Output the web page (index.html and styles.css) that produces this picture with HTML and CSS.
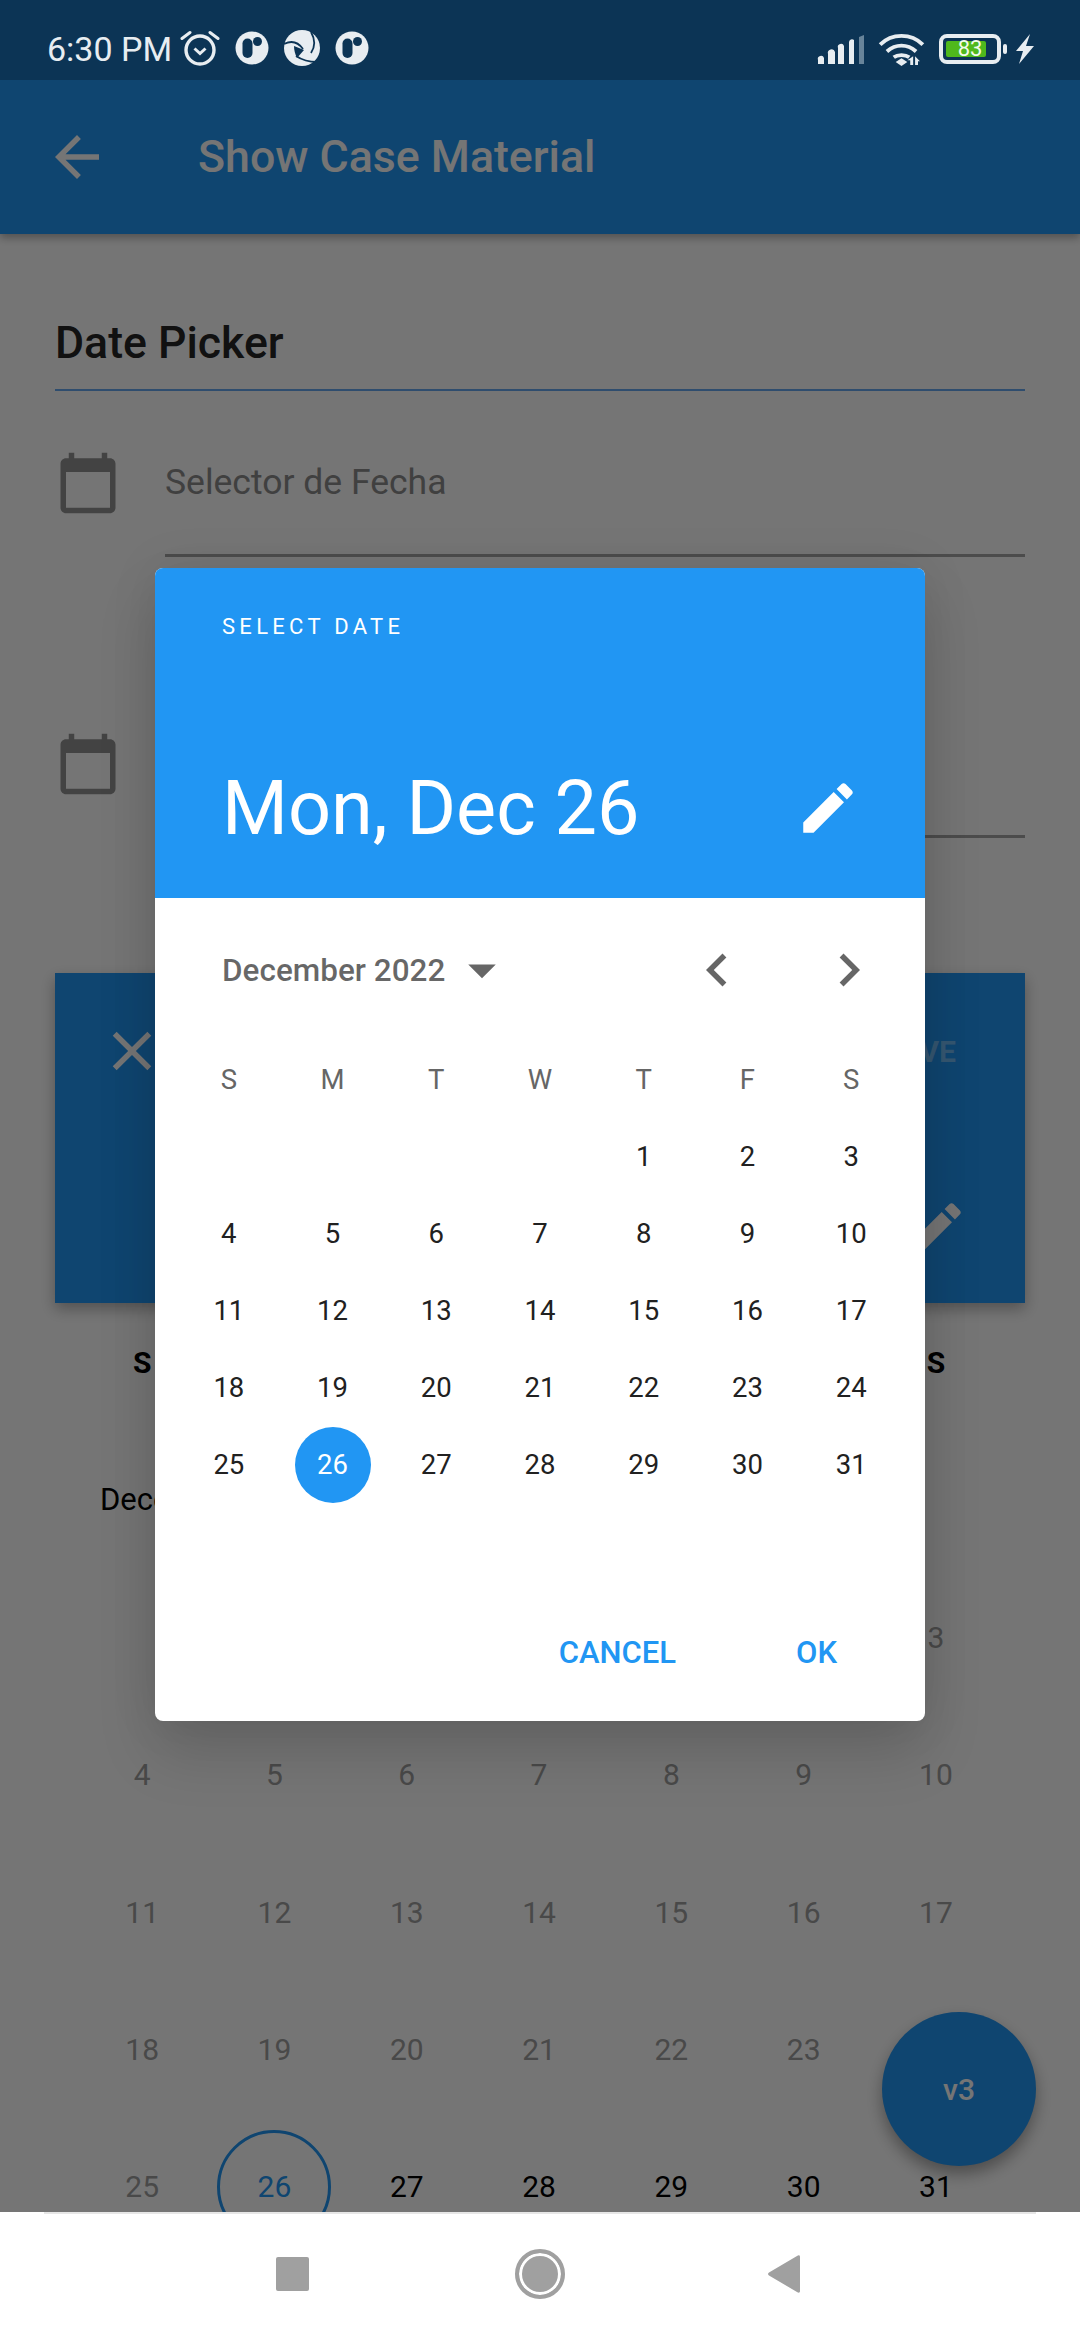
FILE: index.html
```html
<!DOCTYPE html>
<html lang="en">
<head>
<meta charset="utf-8">
<title>Show Case Material</title>
<link rel="stylesheet" href="styles.css">
</head>
<body>
<div class="phone">
  <header class="status">
    <div class="status-left">
      <span class="time">6:30 PM</span>
      <svg class="ic-alarm" viewBox="0 0 40 36"><circle cx="20" cy="20" r="14" fill="none" stroke="#e8edf1" stroke-width="3.400"/><path d="M14.500 18.500l5.500 5 5.500-5" fill="none" stroke="#e8edf1" stroke-width="3"/><path d="M2 8.500L10 2.500M38 8.500L30 2.500" fill="none" stroke="#e8edf1" stroke-width="3" stroke-linecap="round"/></svg>
      <svg class="ic-p" viewBox="0 0 34 34"><circle cx="17" cy="17" r="16.500" fill="#e8edf1"/><rect x="7.500" y="7.500" width="10" height="19.500" rx="5" fill="#0c3455"/><circle cx="22.500" cy="10.500" r="4.500" fill="#0c3455"/></svg>
      <svg class="ic-shutter" viewBox="0 0 36 36"><circle cx="18" cy="18" r="18" fill="#e8edf1"/><path d="M0 14C8 10 14 12 19 19M27 2C31 9 31 17 27 23M33 32C25 32 18 30 12 26" fill="none" stroke="#0c3455" stroke-width="1.800"/><path d="M10 16l10 4-7 8c-2-4-3-8-3-12z" fill="#0c3455"/></svg>
      <svg class="ic-p" viewBox="0 0 34 34"><circle cx="17" cy="17" r="16.500" fill="#e8edf1"/><rect x="7.500" y="7.500" width="10" height="19.500" rx="5" fill="#0c3455"/><circle cx="22.500" cy="10.500" r="4.500" fill="#0c3455"/></svg>
    </div>
    <div class="status-right">
      <svg class="ic-signal" viewBox="0 0 48 32"><g fill="#e8edf1"><path d="M1 30v-4a3 3 0 0 1 6-2v6z"/><path d="M11 30V20a3 3 0 0 1 7-2v12z"/><path d="M21 30V14a3 3 0 0 1 6-2v18z"/><path d="M32 30V8a3 3 0 0 1 5-2v24z"/></g><path d="M42 30V3l5-2v29z" fill="#68849a"/></svg>
      <svg class="ic-wifi" viewBox="0 0 48 34"><g fill="none" stroke="#e8edf1" stroke-width="4"><path d="M2 12C14 0 34 0 46 12"/><path d="M9 19C18 11 30 11 39 19"/><path d="M16 25C20 22 28 22 32 25"/></g><path d="M24 26l6 4-6 4-6-4z" fill="#e8edf1"/><path d="M36 24v9h-3v-5h-3zM38 24l5 5h-2v4h-3z" fill="#e8edf1"/></svg>
      <div class="battery">
        <div class="battery-body"><span class="battery-level">83</span></div>
        <span class="battery-nub"></span>
      </div>
      <svg class="ic-bolt" viewBox="0 0 20 30"><path d="M15 0L1 17h7L4 30 19 12h-8z" fill="#e8edf1"/></svg>
    </div>
  </header>

  <main class="main">
    <div class="appbar">
      <svg class="appbar-back" viewBox="0 0 24 24"><path d="M20 11H7.830l5.590-5.590L12 4l-8 8 8 8 1.410-1.410L7.830 13H20v-2z" fill="#fff"/></svg>
      <h1 class="appbar-title">Show Case Material</h1>
    </div>

    <div class="content">
      <h2 class="section-title">Date Picker</h2>
      <div class="field">
        <svg class="field-icon" viewBox="0 0 24 24"><path d="M20 3h-1V1h-2v2H7V1H5v2H4c-1.100 0-2 .9-2 2v16c0 1.100.9 2 2 2h16c1.100 0 2-.9 2-2V5c0-1.100-.9-2-2-2zm0 18H4V8h16v13z"/></svg>
        <div class="field-input">Selector de Fecha</div>
      </div>
      <div class="field field-last">
        <svg class="field-icon" viewBox="0 0 24 24"><path d="M20 3h-1V1h-2v2H7V1H5v2H4c-1.100 0-2 .9-2 2v16c0 1.100.9 2 2 2h16c1.100 0 2-.9 2-2V5c0-1.100-.9-2-2-2zm0 18H4V8h16v13z"/></svg>
        <div class="field-input"></div>
      </div>

      <section class="card">
        <div class="card-top">
          <svg class="card-icon" viewBox="0 0 24 24"><path d="M19 6.410L17.590 5 12 10.590 6.410 5 5 6.410 10.590 12 5 17.590 6.410 19 12 13.410 17.590 19 19 17.590 13.410 12z"/></svg>
          <span class="card-save">SAVE</span>
        </div>
        <div class="card-bottom">
          <svg class="card-icon" viewBox="0 0 24 24"><path d="M3 17.250V21h3.750L17.810 9.940l-3.750-3.750L3 17.250zM20.710 7.040c.39-.39.39-1.020 0-1.410l-2.340-2.340c-.39-.39-1.020-.39-1.410 0l-1.830 1.830 3.750 3.750 1.830-1.830z"/></svg>
        </div>
      </section>

      <div class="cal-head"><span>S</span><span>M</span><span>T</span><span>W</span><span>T</span><span>F</span><span>S</span></div>
      <div class="cal-month">December 2022</div>
      <div class="cal-grid">
        <span></span><span></span><span></span><span></span><span class="past">1</span><span class="past">2</span><span class="past">3</span>
        <span class="past">4</span><span class="past">5</span><span class="past">6</span><span class="past">7</span><span class="past">8</span><span class="past">9</span><span class="past">10</span>
        <span class="past">11</span><span class="past">12</span><span class="past">13</span><span class="past">14</span><span class="past">15</span><span class="past">16</span><span class="past">17</span>
        <span class="past">18</span><span class="past">19</span><span class="past">20</span><span class="past">21</span><span class="past">22</span><span class="past">23</span><span class="past">24</span>
        <span class="past">25</span><span class="today"><b>26</b></span><span>27</span><span>28</span><span>29</span><span>30</span><span>31</span>
      </div>
    </div>

    <button class="fab">v3</button>

    <div class="scrim">
      <div class="dialog">
        <div class="dialog-head">
          <div class="dialog-over">SELECT DATE</div>
          <div class="dialog-date">
            <span>Mon, Dec 26</span>
            <svg class="dialog-edit" viewBox="0 0 24 24"><path d="M3 17.250V21h3.750L17.810 9.940l-3.750-3.750L3 17.250zM20.710 7.040c.39-.39.39-1.020 0-1.410l-2.340-2.340c-.39-.39-1.020-.39-1.410 0l-1.830 1.830 3.750 3.750 1.830-1.830z"/></svg>
          </div>
        </div>
        <div class="dialog-body">
          <div class="picker-bar">
            <span class="picker-month">December 2022</span>
            <svg class="picker-icon" viewBox="0 0 24 24"><path d="M7 10l5 5 5-5z"/></svg>
            <span class="picker-space"></span>
            <svg class="picker-icon" viewBox="0 0 24 24"><path d="M15.410 7.410L14 6l-6 6 6 6 1.410-1.410L10.830 12z"/></svg>
            <svg class="picker-icon" viewBox="0 0 24 24"><path d="M10 6L8.590 7.410 13.170 12l-4.580 4.580L10 18l6-6z"/></svg>
          </div>
          <div class="picker-grid">
            <span class="wd">S</span><span class="wd">M</span><span class="wd">T</span><span class="wd">W</span><span class="wd">T</span><span class="wd">F</span><span class="wd">S</span>
            <span></span><span></span><span></span><span></span><span>1</span><span>2</span><span>3</span>
            <span>4</span><span>5</span><span>6</span><span>7</span><span>8</span><span>9</span><span>10</span>
            <span>11</span><span>12</span><span>13</span><span>14</span><span>15</span><span>16</span><span>17</span>
            <span>18</span><span>19</span><span>20</span><span>21</span><span>22</span><span>23</span><span>24</span>
            <span>25</span><span class="sel"><b>26</b></span><span>27</span><span>28</span><span>29</span><span>30</span><span>31</span>
          </div>
          <div class="dialog-actions">
            <span class="action">CANCEL</span>
            <span class="action">OK</span>
          </div>
        </div>
      </div>
    </div>
  </main>

  <nav class="navbar">
    <span class="nav-square"></span>
    <span class="nav-home"></span>
    <svg class="nav-back" viewBox="0 0 32 38"><path d="M32 2v34c0 2-1.500 2-3 1L1 20.500c-1.300-1-1.300-2 0-3L29 1c1.500-1 3-1 3 1z" fill="#a0a0a0"/></svg>
  </nav>
</div>
</body>
</html>
```
FILE: styles.css
```css
* { box-sizing: border-box; }
html, body { margin: 0; padding: 0; }
body { font-family: Roboto, "Noto Sans", sans-serif; background: #fff; }
h1, h2 { margin: 0; }

.phone { width: 1080px; height: 2340px; display: flex; flex-direction: column; overflow: hidden; }

/* status bar */
.status { flex: none; height: 80px; background: #0c3455; color: #e8edf1; display: flex; align-items: center; justify-content: space-between; padding: 18px 45px 0 47px; }
.status-left, .status-right { display: flex; align-items: center; }
.time { font-size: 34px; line-height: 40px; margin-right: 8px; }
.ic-alarm { width: 40px; height: 36px; margin-right: 15px; margin-top: -2px; }
.ic-p { width: 34px; height: 34px; margin-top: -2px; }
.ic-shutter { width: 36px; height: 36px; margin: -2px 15px 0 15px; }
.ic-signal { width: 48px; height: 32px; margin-right: 12px; margin-top: 2px; }
.ic-wifi { width: 49px; height: 33px; margin-right: 13px; }
.battery { display: flex; align-items: center; margin-right: 8px; }
.battery-body { width: 62px; height: 30px; border: 4px solid #e8edf1; border-radius: 8px; padding: 3px; display: flex; }
.battery-level { width: 40px; background: #4fb81c; border-radius: 2px; color: #f2fbe9; font-size: 22px; line-height: 16px; text-align: center; padding-left: 8px; flex: none; white-space: nowrap; }
.battery-nub { width: 4px; height: 10px; background: #e8edf1; border-radius: 2px; margin-left: 2px; }
.ic-bolt { width: 20px; height: 30px; }

/* page under the dialog */
.main { flex: 1; min-height: 0; position: relative; overflow: hidden; background: #fff; }
.appbar { height: 154px; background: #2196f3; display: flex; align-items: center; padding-left: 44px; box-shadow: 0 4px 8px rgba(0,0,0,.3); position: relative; }
.appbar-back { width: 66px; height: 66px; margin-right: 88px; }
.appbar-title { font-size: 44.700px; font-weight: 500; color: #fff; }

.content { padding: 0 55px; }
.section-title { height: 157px; padding-top: 81px; font-size: 44.600px; line-height: 56px; font-weight: 500; color: #252525; border-bottom: 2px solid #66a9f0; margin-bottom: 59px; }
.field { display: flex; height: 107px; margin-bottom: 174px; }
.field-last { margin-bottom: 135px; }
.field-icon { flex: none; width: 66px; height: 66px; fill: #939393; margin-right: 44px; }
.field-input { flex: 1; border-bottom: 3px solid #a6a6a6; font-size: 35.500px; line-height: 64px; color: #8c8c8c; }

.card { height: 330px; background: #2196f3; padding: 45px 69px 42px 44px; display: flex; flex-direction: column; justify-content: space-between; box-shadow: 0 6px 14px rgba(0,0,0,.3); }
.card-top { display: flex; justify-content: space-between; align-items: center; }
.card-save { font-size: 30px; font-weight: 700; color: rgba(255,255,255,.38); }
.card-bottom { display: flex; justify-content: flex-end; margin-right: -13px; }
.card-icon { width: 66px; height: 66px; fill: #fff; }

.cal-head { display: grid; grid-template-columns: repeat(7, 132.300px); padding-left: 21px; height: 118px; align-items: center; font-size: 30px; font-weight: 700; color: #000; justify-items: center; }
.cal-month { font-size: 31px; line-height: 40px; color: #000; padding: 59px 0 0 45px; height: 148px; }
.cal-grid { display: grid; grid-template-columns: repeat(7, 132.300px); grid-auto-rows: 137.300px; padding-left: 21px; font-size: 30px; color: #000; }
.cal-grid span { display: flex; align-items: center; justify-content: center; }
.cal-grid .past { color: #a0a0a0; }
.cal-grid .today b { width: 114px; height: 114px; flex: none; border: 3px solid #2196f3; border-radius: 50%; font-weight: 400; color: #2196f3; display: flex; align-items: center; justify-content: center; }

.fab { position: absolute; right: 44px; bottom: 46px; width: 154px; height: 154px; border: 0; border-radius: 50%; background: #2196f3; color: #fff; font-family: inherit; font-size: 30px; font-weight: 500; box-shadow: 0 8px 16px rgba(0,0,0,.35); }

/* dialog */
.scrim { position: absolute; inset: 0; background: rgba(0,0,0,.54); display: flex; align-items: center; justify-content: center; padding-bottom: 3px; }
.dialog { width: 770px; height: 1153px; border-radius: 8px; overflow: hidden; background: #fff; display: flex; flex-direction: column; box-shadow: 0 32px 60px rgba(0,0,0,.14), 0 0 50px rgba(0,0,0,.08); }
.dialog-head { flex: none; height: 330px; background: #2196f3; color: #fff; padding: 44px 48px 0 67px; }
.dialog-over { font-size: 22px; line-height: 30px; letter-spacing: 4.300px; }
.dialog-date { display: flex; align-items: center; justify-content: space-between; margin-top: 122px; font-size: 75.600px; line-height: 88px; }
.dialog-edit { width: 66px; height: 66px; fill: #fff; margin-right: 16px; }

.dialog-body { flex: 1; padding: 0 22px; display: flex; flex-direction: column; }
.picker-bar { display: flex; align-items: center; height: 66px; margin-top: 39px; padding-left: 45px; color: rgba(0,0,0,.6); }
.picker-month { font-size: 31.500px; font-weight: 500; }
.picker-icon { width: 66px; height: 66px; fill: #666; flex: none; }
.picker-bar .picker-icon:nth-of-type(1) { margin-left: 4px; }
.picker-space { flex: 1; }
.picker-bar .picker-icon:nth-of-type(3) { margin-left: 66px; margin-right: 21px; }
.picker-grid { display: grid; grid-template-columns: repeat(7, 1fr); grid-auto-rows: 77px; margin-top: 38px; font-size: 27.500px; color: #212121; }
.picker-grid span { display: flex; align-items: center; justify-content: center; }
.picker-grid .wd { color: #666; }
.picker-grid .sel b { width: 76px; height: 76px; flex: none; border-radius: 50%; background: #2196f3; color: #fff; font-weight: 400; display: flex; align-items: center; justify-content: center; }
.dialog-actions { display: flex; justify-content: flex-end; margin-top: auto; margin-bottom: 48px; padding-right: 66px; gap: 120px; }
.action { font-size: 31px; font-weight: 500; color: #2196f3; line-height: 40px; }

/* navigation bar */
.navbar { flex: none; height: 128px; background: #fff; position: relative; display: flex; align-items: center; padding-left: 276px; padding-bottom: 4px; }
.navbar::before { content: ""; position: absolute; left: 44px; right: 44px; top: 0; height: 2px; background: #e6e6e6; }
.nav-square { width: 33px; height: 34px; background: #a0a0a0; border-radius: 2px; margin-right: 206px; }
.nav-home { width: 50px; height: 50px; border-radius: 50%; border: 4px solid #a0a0a0; background: #a0a0a0; box-shadow: inset 0 0 0 3px #fff; margin-right: 203px; }
.nav-back { width: 32px; height: 38px; }
```
